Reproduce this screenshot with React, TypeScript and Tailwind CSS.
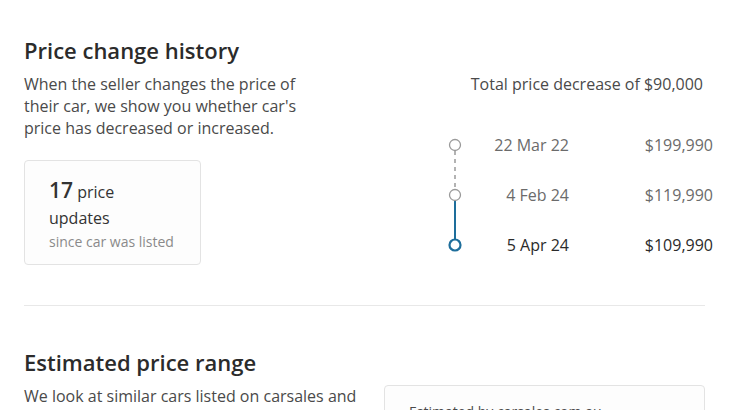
import React from "react";

const history = [
  { date: "22 Mar 22", price: "$199,990", current: false },
  { date: "4 Feb 24", price: "$119,990", current: false },
  { date: "5 Apr 24", price: "$109,990", current: true },
];

const Timeline = () => (
  <svg width="14" height="150" viewBox="0 0 14 150" className="row-span-3">
    <line x1="7" y1="31" x2="7" y2="69" stroke="#9a9a9a" strokeWidth="1.5" strokeDasharray="4 4" />
    <line x1="7" y1="81" x2="7" y2="119" stroke="#1e6e9b" strokeWidth="2" />
    <circle cx="7" cy="25" r="5.5" fill="#fff" stroke="#9a9a9a" strokeWidth="1.3" />
    <circle cx="7" cy="75" r="5.5" fill="#fff" stroke="#9a9a9a" strokeWidth="1.3" />
    <circle cx="7" cy="125" r="5.5" fill="#fff" stroke="#1e6e9b" strokeWidth="2.2" />
  </svg>
);

export default function App() {
  return (
    <div className="w-[729px] bg-white text-[#4a4a4a] font-['Open_Sans',sans-serif]">
      <section className="mx-6 pt-[35px] pb-[35px] border-b border-[#e8e8e8] flex justify-between">
        <div className="w-[290px]">
          <h2 className="text-[22px] leading-[30px] font-semibold text-[#2b2b2b]">Price change history</h2>
          <p className="mt-2 text-base leading-[22px]">
            When the seller changes the price of their car, we show you whether car's price has decreased or increased.
          </p>
          <div className="mt-[21px] w-[177px] h-[105px] rounded border border-[#e3e3e3] bg-[#fdfdfd] px-6 pt-[15px]">
            <p className="leading-[28px] text-[#333]">
              <span className="text-[21px] font-semibold">17</span> <span className="text-base">price</span>
            </p>
            <p className="text-base leading-[24px] text-[#333]">updates</p>
            <p className="text-sm leading-[24px] text-[#8a8a8a]">since car was listed</p>
          </div>
        </div>
        <div className="flex flex-col items-end pt-[38px]">
          <p className="text-base leading-[22px] mr-[2px]">Total price decrease of $90,000</p>
          <div className="mt-[25px] mr-[-8px] grid grid-cols-[14px_107px_144px] auto-rows-[50px] items-center">
            <Timeline />
            {history.map((h) => (
              <React.Fragment key={h.date}>
                <span className={`text-right text-base ${h.current ? "text-[#2b2b2b]" : "text-[#6b6b6b]"}`}>{h.date}</span>
                <span className={`text-right text-base ${h.current ? "text-[#2b2b2b]" : "text-[#6b6b6b]"}`}>{h.price}</span>
              </React.Fragment>
            ))}
          </div>
        </div>
      </section>
      <section className="px-6 pt-[41px] flex justify-between">
        <div className="w-[340px]">
          <h2 className="text-[22px] leading-[30px] font-semibold text-[#2b2b2b]">Estimated price range</h2>
          <p className="mt-2 text-base leading-[22px]">
            We look at similar cars listed on carsales and compare their prices to estimate a fair range.
          </p>
        </div>
        <div className="mt-[38px] w-[321px] h-[120px] rounded border border-[#e3e3e3] bg-[#fdfdfd] px-6 pt-4">
          <p className="text-sm text-[#4a4a4a]">Estimated by carsales.com.au</p>
        </div>
      </section>
    </div>
  );
}
